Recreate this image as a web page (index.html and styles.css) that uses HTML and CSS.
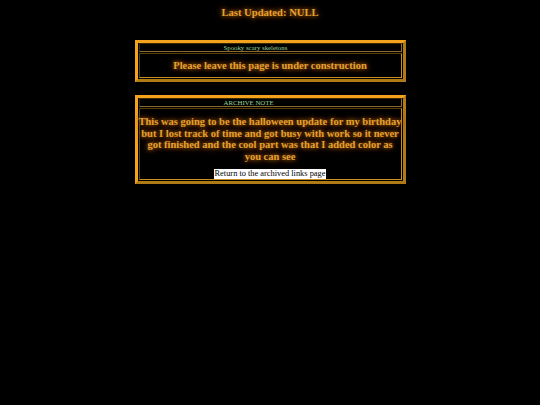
FILE: index.html
```html
<!DOCTYPE html>
<html>
<head>
<meta charset="utf-8">
<title>Last Updated: NULL</title>
<link rel="stylesheet" href="styles.css">
</head>
<body>
<h1 class="title">Last Updated: NULL</h1>
<div class="box">
  <div class="head">Spooky scary skeletons</div>
  <div class="body">
    <p class="glow">Please leave this page is under construction</p>
  </div>
</div>
<div class="box">
  <div class="head">ARCHIVE NOTE</div>
  <div class="body body-note">
    <p class="glow note">This was going to be the halloween update for my birthday<br>but I lost track of time and got busy with work so it never<br>got finished and the cool part was that I added color as<br>you can see</p>
    <a class="back" href="#">Return to the archived links page</a>
  </div>
</div>
</body>
</html>
```

FILE: styles.css
```css
html, body {
  margin: 0;
  padding: 0;
  background: #000;
}
body {
  font-family: "Liberation Serif", "Times New Roman", serif;
  display: flex;
  flex-direction: column;
  align-items: center;
}
.title {
  margin: 6px 0 0 0;
  height: 34px;
  font-size: 10.6px;
  line-height: 14px;
  font-weight: bold;
  color: #e8a030;
  text-shadow: 0 0 4px #c07010, 0 0 8px #7a4000;
}
.box {
  width: 263px;
  border: 3px solid;
  border-color: #f2a21c #b07a14 #b07a14 #f2a21c;
  padding: 0 1px 1px 1px;
  display: flex;
  flex-direction: column;
  gap: 1px;
  margin-bottom: 13px;
}
.head {
  border: 1px solid;
  border-color: #3a2800 #8a6a30 #8a6a30 #3a2800;
  font-size: 6.8px;
  line-height: 7px;
  color: #9ad49a;
  padding: 0 0 0 84px;
}
.body {
  border: 1px solid;
  border-color: #5a3c08 #c89020 #c89020 #5a3c08;
  padding: 5px 0 4px;
  text-align: center;
}
.glow {
  margin: 0;
  font-size: 10.5px;
  line-height: 14px;
  font-weight: bold;
  color: #e8a030;
  text-shadow: 0 0 4px #c07010, 0 0 8px #7a4000;
}
.body-note {
  padding: 7px 0 0;
}
.note {
  line-height: 11.7px;
  margin: 0 -6px 6px;
}
.back {
  display: table;
  margin: 0 auto;
  background: #fff;
  color: #000;
  text-decoration: none;
  font-size: 8.4px;
  line-height: 10px;
  padding: 0 1px;
}
```
